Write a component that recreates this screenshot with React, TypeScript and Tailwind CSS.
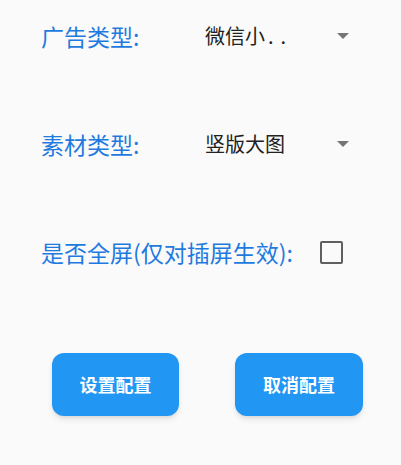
export default function App() {
  return (
    <div
      className="w-[401px] h-[465px] bg-[#fafafa] pl-[41px] pt-[14px]"
      style={{ fontFamily: '"Noto Sans CJK SC", "Noto Sans", sans-serif' }}
    >
      {/* ad type */}
      <div className="flex items-center h-[44px]">
        <span className="w-[164px] text-[23px] text-[#1f7ae0]">广告类型:</span>
        <div className="flex items-center w-[144px] justify-between">
          <span className="text-[20px] text-[#212121]">
            微信小<span className="ml-[3px] tracking-[7px]">..</span>
          </span>
          <svg width="12" height="6" viewBox="0 0 12 6">
            <path d="M0 0 L12 0 L6 6 Z" fill="#757575" />
          </svg>
        </div>
      </div>

      {/* material type */}
      <div className="flex items-center h-[44px] mt-[64px]">
        <span className="w-[164px] text-[23px] text-[#1f7ae0]">素材类型:</span>
        <div className="flex items-center w-[144px] justify-between">
          <span className="text-[20px] text-[#212121]">竖版大图</span>
          <svg width="12" height="6" viewBox="0 0 12 6">
            <path d="M0 0 L12 0 L6 6 Z" fill="#757575" />
          </svg>
        </div>
      </div>

      {/* fullscreen */}
      <div className="flex items-center h-[44px] mt-[64px]">
        <span className="text-[23px] text-[#1f7ae0]">是否全屏(仅对插屏生效):</span>
        <div className="ml-[27px] w-[23px] h-[23px] border-[2.5px] border-[#5f5f5f] rounded-[2px]" />
      </div>

      {/* buttons */}
      <div className="flex mt-[79px] pl-[11px] gap-[56px]">
        <button className="w-[127px] h-[63px] rounded-[12px] bg-[#2196f3] text-white text-[18px] font-semibold shadow-md">
          设置配置
        </button>
        <button className="w-[128px] h-[63px] rounded-[12px] bg-[#2196f3] text-white text-[18px] font-semibold shadow-md">
          取消配置
        </button>
      </div>
    </div>
  )
}
